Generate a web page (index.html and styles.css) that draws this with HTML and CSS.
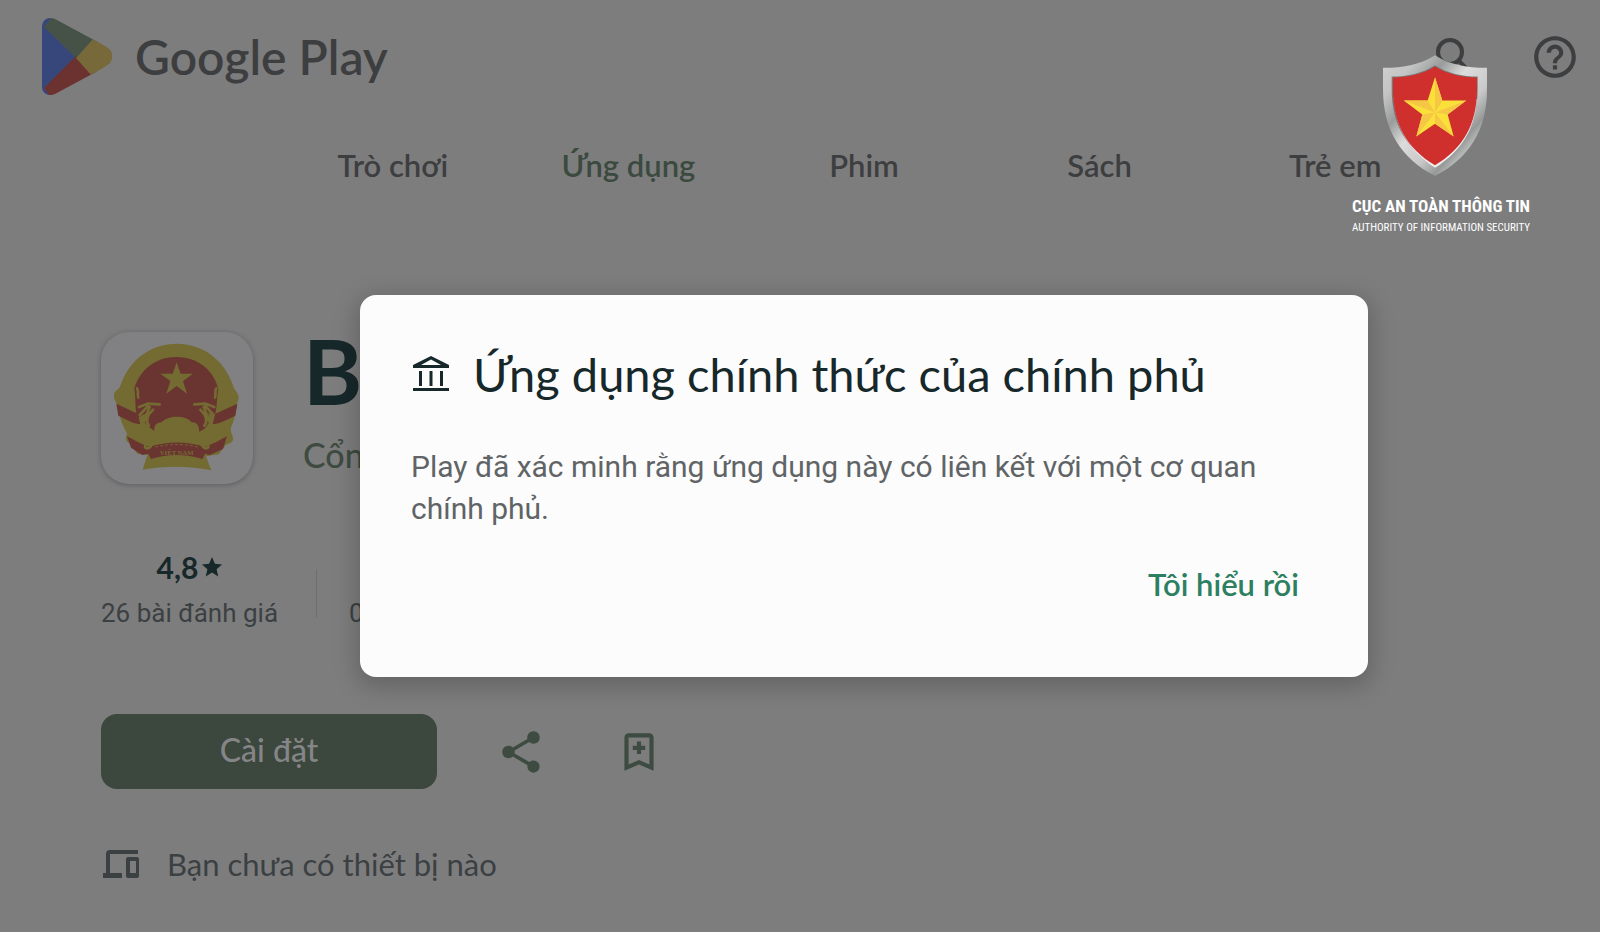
FILE: index.html
```html
<!DOCTYPE html>
<html lang="vi">
<head>
<meta charset="utf-8">
<title>Google Play</title>
<link rel="stylesheet" href="styles.css">
</head>
<body>
<header class="topbar">
  <a class="brand" href="#">
    <svg class="brand-mark" viewBox="0 0 71 78" aria-hidden="true">
      <defs><clipPath id="tri"><path d="M0 9C0 2 6-2 13 1L65 29C72 33 72 43 65 48L13 76C6 79 0 75 0 69Z"/></clipPath></defs>
      <g clip-path="url(#tri)">
        <path fill="#37477c" d="M0 0h8l30 39L8 78H0z"/>
        <path fill="#465248" d="M2 9 12-4 60 22 34 40z"/>
        <path fill="#6c3230" d="M2 70 34 38 58 56 12 84z"/>
        <path fill="#78693a" d="M34 40 52 20 78 38 50 58z"/>
      </g>
    </svg>
    <span class="brand-name">Google Play</span>
  </a>
  <div class="tools">
    <button class="tool" aria-label="Tìm kiếm">
      <svg viewBox="0 0 50 50" fill="none" stroke="#3d3e40" stroke-width="4"><circle cx="20" cy="20" r="12"/><path d="m29 29 13 13"/></svg>
    </button>
    <button class="tool" aria-label="Trợ giúp">
      <svg viewBox="0 0 24 24" fill="#3d3e40"><path d="M11 18h2v-2h-2v2zm1-16C6.48 2 2 6.48 2 12s4.480 10 10 10 10-4.480 10-10S17.520 2 12 2zm0 18c-4.410 0-8-3.590-8-8s3.590-8 8-8 8 3.590 8 8-3.590 8-8 8zm0-14c-2.210 0-4 1.790-4 4h2c0-1.100.9-2 2-2s2 .9 2 2c0 2-3 1.750-3 5h2c0-2.250 3-2.500 3-5 0-2.210-1.790-4-4-4z"/></svg>
    </button>
  </div>
</header>

<nav class="tabs">
  <a href="#">Trò chơi</a>
  <a class="active" href="#">Ứng dụng</a>
  <a href="#">Phim</a>
  <a href="#">Sách</a>
  <a href="#">Trẻ em</a>
</nav>

<main class="app">
  <section class="app-head">
    <div class="app-icon">
      <svg viewBox="-12 -9 456 456" aria-hidden="true">
        <path fill="#736b32" d="M215 26c78 0 142 48 168 122 4 20 20 26 18 42-2 14-6 12-6 24-2 20-8 44-18 66 0 20 14 30 4 40-8 8-18 6-22 14l-18 24-38 6 16 42c-68-14-140-14-206-2l14-44-30-4-24-32c-10-2-14-16-6-26-14-24-24-50-28-78-2-20-14-22-12-42 2-12 14-12 20-28C73 74 137 26 215 26z"/>
        <path fill="#6a3430" d="M215 66c66 0 112 42 125 96-6 34-2 56-12 82l-18-12 4 28-16 22-16 8c2-20-10-30-22-28-18-22-70-22-90 0-14 0-24 8-22 26l-16-12-14-16 6-26-26 14c-10-24-4-50-10-88 17-54 61-94 127-94z"/>
        <path fill="#6a3430" d="m34 206 64 30 8 32c-28-4-48-18-66-26zM397 206l-66 30-8 32c28-4 50-18 68-26z"/>
        <path fill="#6a3430" d="m66 304 34 18 32 14c54-18 114-18 168 0l32-14 34-18-12 38-40 18-14-4-8 16c-50-16-104-16-154 0l-8-16-18 4-34-22z"/>
        <path fill="#736b32" d="m215 82 12 34h37l-30 22 12 38-31-23-31 23 12-38-30-22h37z"/>
        <g fill="none" stroke="#736b32" stroke-width="8" stroke-linecap="round" stroke-linejoin="round">
          <path d="M96 160c6 8 0 20 4 28M102 216l26-10 36 2M104 240l24-26M116 260l18-44M132 272c-10-12-8-28 12-48"/>
          <path d="M334 160c-6 8 0 20-4 28M328 216l-26-10-34 2M326 240l-24-26M314 260l-18-44M298 272c10-12 8-28-12-48"/>
          <path d="M108 318c16-14 40-4 32 12s-26 10-18 0M322 318c-16-14-40-4-32 12s26 10 18 0"/>
          <path d="M152 336c42-10 84-10 126 0" stroke-width="3" stroke-dasharray="6 9"/>
        </g>
        <text class="emblem-text" x="215" y="361" text-anchor="middle">VIỆT NAM</text>
      </svg>
    </div>
    <div class="app-title">
      <h1>B</h1>
      <a href="#">Cổn</a>
    </div>
  </section>

  <section class="stats">
    <div class="stat">
      <div class="score">4,8<svg viewBox="0 0 20 20" fill="#17282a" aria-hidden="true"><path d="m10 0 2.900 6.800 7.100.6-5.400 4.800 1.700 7.300L10 15.600l-6.300 3.900 1.700-7.300L0 7.400l7.100-.6z"/></svg></div>
      <div class="stat-label">26 bài đánh giá</div>
    </div>
    <div class="stat stat-next">
      <div class="stat-label">0</div>
    </div>
  </section>

  <section class="actions">
    <button class="install">Cài đặt</button>
    <button class="action" aria-label="Chia sẻ">
      <svg viewBox="0 0 24 24" fill="#3d4b40"><path d="M18 16.080c-.76 0-1.440.3-1.960.77L8.910 12.700c.05-.23.09-.46.09-.7s-.04-.47-.09-.7l7.050-4.110c.54.5 1.250.81 2.040.81 1.660 0 3-1.340 3-3s-1.340-3-3-3-3 1.340-3 3c0 .24.04.47.09.7L8.040 9.810C7.500 9.310 6.790 9 6 9c-1.660 0-3 1.340-3 3s1.340 3 3 3c.79 0 1.500-.31 2.040-.81l7.120 4.160c-.05.21-.08.43-.08.65 0 1.610 1.310 2.920 2.920 2.920s2.920-1.310 2.920-2.920-1.310-2.920-2.920-2.920z"/></svg>
    </button>
    <button class="action" aria-label="Thêm vào danh sách mong muốn">
      <svg viewBox="0 0 24 24" fill="#3d4b40"><path d="M17 3H7c-1.100 0-2 .9-2 2v16l7-3 7 3V5c0-1.100-.9-2-2-2zm0 15-5-2.180L7 18V5h10v13z"/><path d="M11 7h2v2h2v2h-2v2h-2v-2H9V9h2z"/></svg>
    </button>
  </section>

  <section class="device">
    <svg viewBox="0 0 36 28" fill="#3b4042" aria-hidden="true"><path d="M3 23V4q0-4 4-4h28v4H7v19h12v5H0v-5z"/><path fill-rule="evenodd" d="M25 7h9q2 0 2 2v17q0 2-2 2h-9q-2 0-2-2V9q0-2 2-2zm2 4v12h6V11z"/></svg>
    <span>Bạn chưa có thiết bị nào</span>
  </section>
</main>

<section class="dialog" role="dialog" aria-labelledby="dialog-title">
  <div class="dialog-head">
    <svg viewBox="0 0 36 36" fill="#17282a" aria-hidden="true"><path fill-rule="evenodd" d="M18 0 36 9v3H0V9zm0 3.500L8 9h20z"/><path d="M6 15h3v15H6zM16.500 15h3v15h-3zM27 15h3v15h-3zM0 32h36v3H0z"/></svg>
    <h2 id="dialog-title">Ứng dụng chính thức của chính phủ</h2>
  </div>
  <p>Play đã xác minh rằng ứng dụng này có liên kết với một cơ quan chính phủ.</p>
  <button class="confirm">Tôi hiểu rồi</button>
</section>

<aside class="agency">
  <svg viewBox="0 0 312 362" aria-hidden="true">
    <defs>
      <linearGradient id="steel" x1="0" y1="0" x2="1" y2="1">
        <stop offset="0" stop-color="#d2d2d2"/><stop offset=".18" stop-color="#c4c4c4"/><stop offset=".32" stop-color="#9a9c9c"/><stop offset=".46" stop-color="#dcdcdc"/><stop offset=".62" stop-color="#cacaca"/><stop offset=".74" stop-color="#979999"/><stop offset=".86" stop-color="#dedede"/><stop offset="1" stop-color="#c8c8c8"/>
      </linearGradient>
    </defs>
    <path fill="url(#steel)" d="M156 0c44 28 92 38 156 38v64c0 122-54 208-156 260C54 310 0 224 0 102V38c64 0 112-10 156-38z"/>
    <path fill="#777979" d="M156 30c38 24 80 34 128 34v36c0 108-42 180-128 230C70 280 26 210 26 100V64c50 0 92-10 130-34z"/>
    <path fill="#f0eeee" d="M32 130c8 96 46 154 124 208 78-52 118-110 126-206z"/>
    <path fill="#cf2f2d" d="M156 34c38 23 80 33 126 33v35c0 106-42 178-126 228C72 280 30 208 30 102V67c46 0 88-10 126-33z"/>
    <path fill="#fbe03a" d="m156 66 22 70h72l-56 42 18 66-56-38-56 38 18-66-56-42h72z"/>
    <path fill="#f5c745" d="M156 66v106l22-36zM250 136l-94 36 38 6zM212 244l-56-72v34zM100 244l56-72-38 6zM62 136l94 36-22-36z"/>
  </svg>
  <strong>CỤC AN TOÀN THÔNG TIN</strong>
  <span>AUTHORITY OF INFORMATION SECURITY</span>
</aside>
</body>
</html>
```
FILE: styles.css
```css
* { box-sizing: border-box; }

body {
  margin: 0;
  min-height: 100vh;
  position: relative;
  background: #7d7d7e;
  color: #3b4042;
  font-family: Lato, "Noto Sans", sans-serif;
}

h1, h2, p { margin: 0; font-weight: 400; }
a { color: inherit; text-decoration: none; }
svg { display: block; }
button { border: 0; padding: 0; background: none; font: inherit; color: inherit; }

.topbar {
  display: flex;
  align-items: center;
  justify-content: space-between;
  height: 114px;
  padding: 0 20px 0 42px;
}
.brand { display: flex; align-items: center; gap: 22px; color: #3d3e40; }
.brand-mark { width: 71px; height: 78px; }
.brand-name { font-size: 48px; font-weight: 600; line-height: 56px; }
.tools { display: flex; gap: 50px; }
.tool svg { width: 50px; height: 50px; }

.tabs {
  display: grid;
  grid-template-columns: repeat(5, 1fr);
  margin: 31px 147px 0 275px;
  text-align: center;
  font-size: 31px;
  font-weight: 600;
  line-height: 40px;
  color: #3d3e40;
}
.tabs .active { color: #3b4a3e; }

.app { padding: 147px 101px 48px; }

.app-head { display: flex; gap: 50px; }
.app-icon {
  width: 152px;
  height: 152px;
  border-radius: 28px;
  background: #818183;
  box-shadow: 0 1px 4px 1px #666667;
}
.app-icon svg { width: 100%; height: 100%; }
.emblem-text { font: 700 20px "Liberation Serif", serif; fill: #736b32; }
.app-title h1 { font-size: 90px; font-weight: 700; line-height: 76px; color: #17282a; }
.app-title a { display: block; margin-top: 27px; font-size: 34px; line-height: 40px; color: #3d4b40; font-weight: 500; }

.stats { display: flex; align-items: flex-end; margin-top: 63px; }
.stat { position: relative; padding-right: 38px; text-align: center; }
.score {
  display: flex;
  align-items: center;
  justify-content: center;
  gap: 4px;
  font-size: 30px;
  font-weight: 700;
  line-height: 40px;
  color: #17282a;
}
.score svg { width: 20px; height: 20px; }
.stat-label { font-family: Roboto, sans-serif; font-size: 26px; line-height: 32px; margin-top: 10px; }
.stat-next { padding: 18px 0 0 32px; border-left: 1px solid transparent; border-image: linear-gradient(#6e6e6f 80%, transparent 80%) 1; }

.actions { display: flex; align-items: center; margin-top: 85px; }
.install {
  width: 336px;
  height: 75px;
  margin-right: 59px;
  padding-bottom: 4px;
  border-radius: 16px;
  background: #3c473d;
  color: #858587;
  font-size: 32px;
  font-weight: 500;
}
.action { margin-right: 68px; }
.action svg { width: 50px; height: 50px; }

.device { display: flex; align-items: center; gap: 28px; margin-top: 53px; padding-left: 2px; font-size: 31px; line-height: 44px; }
.device svg { width: 36px; height: 28px; }

.dialog {
  position: absolute;
  top: 295px;
  left: 360px;
  right: 232px;
  padding: 51px 69px 73px 51px;
  border-radius: 16px;
  background: #fcfcfc;
  box-shadow: 0 6px 24px 4px rgba(0, 0, 0, 0.2);
}
.dialog-head { display: flex; align-items: center; gap: 24px; padding-left: 2px; }
.dialog-head svg { width: 36px; height: 36px; }
.dialog h2 { font-size: 47px; line-height: 56px; color: #17282a; }
.dialog p { margin-top: 44px; font-family: Roboto, sans-serif; font-size: 30px; line-height: 42px; color: #606466; }
.confirm { display: block; margin: 34px 0 0 auto; font-size: 31px; font-weight: 600; line-height: 40px; color: #2c8061; }

.agency {
  position: absolute;
  top: 55px;
  right: 70px;
  display: flex;
  flex-direction: column;
  align-items: center;
  color: #fff;
  font-family: "Roboto Condensed", "Liberation Sans Narrow", sans-serif;
}
.agency svg { width: 104px; height: 121px; margin-right: 12px; }
.agency strong { margin-top: 20px; font-size: 17px; line-height: 20px; }
.agency span { margin-top: 5px; font-size: 11px; line-height: 14px; }
```
